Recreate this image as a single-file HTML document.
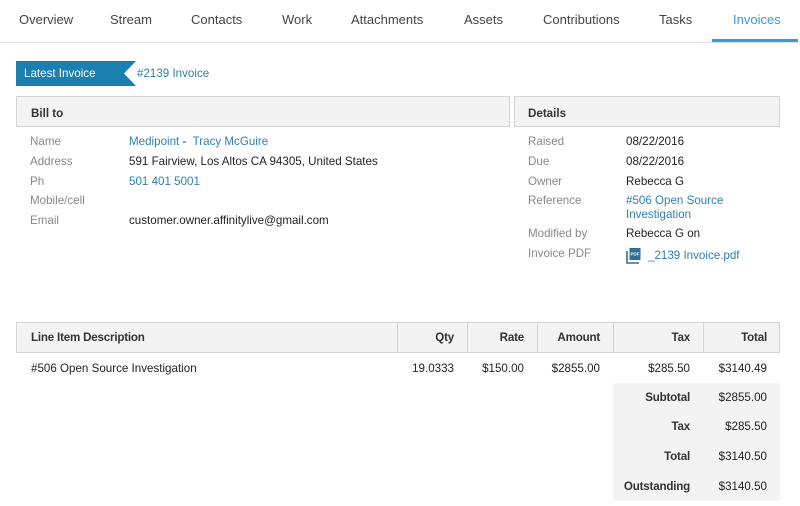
<!DOCTYPE html>
<html><head><style>
*{margin:0;padding:0;box-sizing:border-box}
body{width:800px;height:506px;background:#fff;font-family:"Liberation Sans",sans-serif;font-size:11.6px;color:#222;position:relative;overflow:hidden}
.a{position:absolute;white-space:nowrap}
.tab{position:absolute;top:12px;font-size:13px;color:#444}
.lbl{color:#888}
.lnk{color:#2f7fb0}
.hdr{position:absolute;background:#f3f3f3;border:1px solid #d4d4d4;font-weight:bold;font-size:11.6px;color:#333}
.b{font-weight:bold;color:#333;letter-spacing:-0.2px}
</style></head><body>
<div class="tab" style="left:19px">Overview</div>
<div class="tab" style="left:110px">Stream</div>
<div class="tab" style="left:191px">Contacts</div>
<div class="tab" style="left:282px">Work</div>
<div class="tab" style="left:351px">Attachments</div>
<div class="tab" style="left:464px">Assets</div>
<div class="tab" style="left:543px">Contributions</div>
<div class="tab" style="left:659px">Tasks</div>
<div class="tab" style="left:733px;color:#3a9ad4">Invoices</div>
<div class="a" style="left:0;top:42px;width:800px;height:1px;background:#e2e2e2"></div>
<div class="a" style="left:712px;top:39px;width:86px;height:3px;background:#3a9ad4"></div>

<svg class="a" style="left:16px;top:61px" width="120" height="25"><polygon points="0,0 120,0 108,12.5 120,25 0,25" fill="#1b7fb0"/></svg>
<div class="a" style="left:24px;top:67px;color:#fff">Latest Invoice</div>
<div class="a lnk" style="left:137px;top:67px">#2139 Invoice</div>

<div class="hdr" style="left:16px;top:96px;width:494px;height:31px;padding:10px 0 0 14px">Bill to</div>
<div class="hdr" style="left:514px;top:96px;width:266px;height:31px;padding:10px 0 0 13px">Details</div>

<div class="a lbl" style="left:30px;top:135px">Name</div>
<div class="a lnk" style="left:129px;top:135px">Medipoint <span style="color:#222">-</span>&nbsp; Tracy McGuire</div>
<div class="a lbl" style="left:30px;top:155px">Address</div>
<div class="a" style="left:129px;top:155px">591 Fairview, Los Altos CA 94305, United States</div>
<div class="a lbl" style="left:30px;top:175px">Ph</div>
<div class="a lnk" style="left:129px;top:175px">501 401 5001</div>
<div class="a lbl" style="left:30px;top:194px">Mobile/cell</div>
<div class="a lbl" style="left:30px;top:214px">Email</div>
<div class="a" style="left:129px;top:214px">customer.owner.affinitylive@gmail.com</div>

<div class="a lbl" style="left:528px;top:135px">Raised</div>
<div class="a" style="left:626px;top:135px">08/22/2016</div>
<div class="a lbl" style="left:528px;top:155px">Due</div>
<div class="a" style="left:626px;top:155px">08/22/2016</div>
<div class="a lbl" style="left:528px;top:175px">Owner</div>
<div class="a" style="left:626px;top:175px">Rebecca G</div>
<div class="a lbl" style="left:528px;top:194px">Reference</div>
<div class="a lnk" style="left:626px;top:194px;line-height:14px">#506 Open Source<br>Investigation</div>
<div class="a lbl" style="left:528px;top:227px">Modified by</div>
<div class="a" style="left:626px;top:227px">Rebecca G on</div>
<div class="a lbl" style="left:528px;top:247px">Invoice PDF</div>
<svg class="a" style="left:626px;top:247px" width="16" height="17"><path d="M1 4 V16 H13" fill="none" stroke="#2f6f95" stroke-width="1.6"/><rect x="3.5" y="1" width="11" height="12" fill="#2f6f95"/><text x="4.5" y="8.5" font-size="4.5" fill="#fff" font-weight="bold" font-family="Liberation Sans">PDF</text></svg>
<div class="a lnk" style="left:648px;top:249px">_2139 Invoice.pdf</div>

<div class="hdr" style="left:16px;top:322px;width:764px;height:31px"></div>
<div class="a" style="left:397px;top:322px;width:1px;height:31px;background:#d4d4d4"></div>
<div class="a" style="left:467px;top:322px;width:1px;height:31px;background:#d4d4d4"></div>
<div class="a" style="left:537px;top:322px;width:1px;height:31px;background:#d4d4d4"></div>
<div class="a" style="left:613px;top:322px;width:1px;height:31px;background:#d4d4d4"></div>
<div class="a" style="left:703px;top:322px;width:1px;height:31px;background:#d4d4d4"></div>
<div class="a b" style="left:31px;top:331px">Line Item Description</div>
<div class="a b" style="right:346px;top:331px">Qty</div>
<div class="a b" style="right:276px;top:331px">Rate</div>
<div class="a b" style="right:200px;top:331px">Amount</div>
<div class="a b" style="right:110px;top:331px">Tax</div>
<div class="a b" style="right:33px;top:331px">Total</div>

<div class="a" style="left:31px;top:362px">#506 Open Source Investigation</div>
<div class="a" style="right:346px;top:362px">19.0333</div>
<div class="a" style="right:276px;top:362px">$150.00</div>
<div class="a" style="right:200px;top:362px">$2855.00</div>
<div class="a" style="right:110px;top:362px">$285.50</div>
<div class="a" style="right:33px;top:362px">$3140.49</div>

<div class="a" style="left:613px;top:383px;width:167px;height:118px;background:#f3f3f3;border-radius:3px"></div>
<div class="a b" style="right:110px;top:391px">Subtotal</div><div class="a" style="right:33px;top:391px">$2855.00</div>
<div class="a b" style="right:110px;top:420px">Tax</div><div class="a" style="right:33px;top:420px">$285.50</div>
<div class="a b" style="right:110px;top:450px">Total</div><div class="a" style="right:33px;top:450px">$3140.50</div>
<div class="a b" style="right:110px;top:480px">Outstanding</div><div class="a" style="right:33px;top:480px">$3140.50</div>
</body></html>
